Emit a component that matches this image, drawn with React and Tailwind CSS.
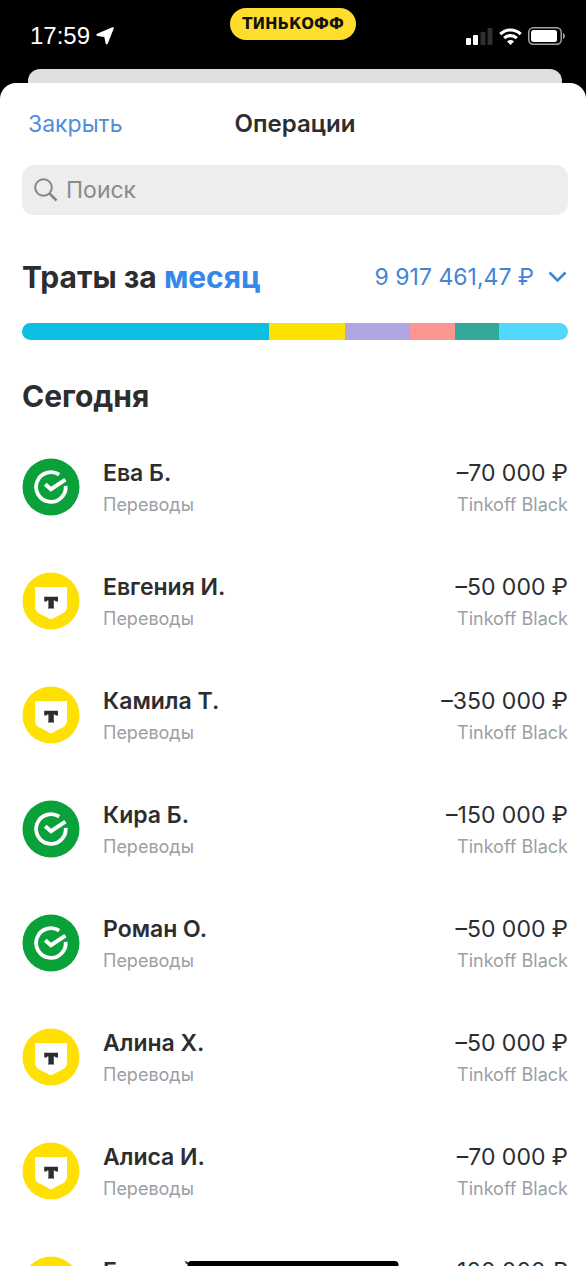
import { useState } from 'react'

const SEGMENTS = [
  { id: 'transfers', grow: 247, color: 'bg-[#0abfe0]' },
  { id: 'shops', grow: 76, color: 'bg-[#fde101]' },
  { id: 'services', grow: 65, color: 'bg-[#b0a5e3]' },
  { id: 'health', grow: 45, color: 'bg-[#fb9692]' },
  { id: 'transport', grow: 44, color: 'bg-[#32a898]' },
  { id: 'other', grow: 69, color: 'bg-[#52d8fb]' },
]

const OPERATIONS = [
  { id: 1, name: 'Ева Б.', amount: '–70 000 ₽', bank: 'sber' },
  { id: 2, name: 'Евгения И.', amount: '–50 000 ₽', bank: 'tinkoff' },
  { id: 3, name: 'Камила Т.', amount: '–350 000 ₽', bank: 'tinkoff' },
  { id: 4, name: 'Кира Б.', amount: '–150 000 ₽', bank: 'sber' },
  { id: 5, name: 'Роман О.', amount: '–50 000 ₽', bank: 'sber' },
  { id: 6, name: 'Алина Х.', amount: '–50 000 ₽', bank: 'tinkoff' },
  { id: 7, name: 'Алиса И.', amount: '–70 000 ₽', bank: 'tinkoff' },
  { id: 8, name: 'Евгений', amount: '–100 000 ₽', bank: 'tinkoff' },
]

function SberIcon() {
  return (
    <svg viewBox="0 0 58 58" className="size-[58px] shrink-0" fill="none" aria-hidden="true">
      <circle cx="29" cy="29" r="28.5" fill="#0aa03a" />
      <path d="M37.2 16.7A14.8 14.8 0 1 0 43.7 27.8" stroke="#fff" strokeWidth="3.8" />
      <path d="M23.2 26.2L29 31.2L43.4 21.6" stroke="#fff" strokeWidth="4" />
    </svg>
  )
}

function TinkoffIcon() {
  return (
    <svg viewBox="0 0 58 58" className="size-[58px] shrink-0" aria-hidden="true">
      <circle cx="29" cy="29" r="28.5" fill="#fee003" />
      <path d="M13 15H45V34.5C45 37.5 43.6 39.7 41 41.2L29 47.5L17 41.2C14.4 39.7 13 37.5 13 34.5Z" fill="#fff" />
      <path d="M22.2 24.8H36V29.6H33.6L33 28.4H31.8V35L32.2 36.4H26L26.4 35V28.4H25.2L24.6 29.6H22.2Z" fill="#2b2d33" />
    </svg>
  )
}

function StatusBar() {
  return (
    <div className="grid h-[69px] shrink-0 grid-cols-[1fr_auto_1fr] items-start px-5 text-white">
      <div className="flex items-center gap-1.5 pt-5 pl-2.5">
        <span className="font-['Liberation_Sans'] text-2xl leading-8">17:59</span>
        <svg viewBox="0 0 18 18" className="size-[18px]" fill="currentColor" aria-hidden="true">
          <path d="M17.6.4C17.9.7 17.9 1.1 17.7 1.6L11.8 16.6C11.3 17.8 9.8 17.6 9.6 16.3L8.3 9.9L1.4 9C.1 8.8-.1 7.3 1.1 6.7L16.4.3C16.9.1 17.3.1 17.6.4Z" />
        </svg>
      </div>
      <div className="mt-2 flex h-8 items-center rounded-full bg-[#ffdd2d] px-3 font-['DejaVu_Sans'] text-[15px] font-bold text-[#14120c]">
        ТИНЬКОФФ
      </div>
      <div className="flex items-center justify-end gap-1.5 pt-[27px]">
        <svg viewBox="0 0 27 17" className="h-[17px] w-[27px]" aria-hidden="true">
          <rect x="0" y="10" width="5" height="7" rx="1" fill="#fff" />
          <rect x="7" y="7" width="5" height="10" rx="1" fill="#fff" />
          <rect x="14.5" y="4" width="5" height="13" rx="1" fill="#303030" />
          <rect x="21.5" y="0" width="5" height="17" rx="1" fill="#303030" />
        </svg>
        <svg viewBox="0 0 23 17" className="h-[17px] w-[23px]" fill="none" stroke="#fff" strokeWidth="3.2" aria-hidden="true">
          <path d="M1.3 6.2A14.5 14.5 0 0 1 21.7 6.2" />
          <path d="M5.2 10.2A9 9 0 0 1 17.8 10.2" />
          <path d="M11.5 17L8 13.4A5 5 0 0 1 15 13.4Z" fill="#fff" stroke="none" />
        </svg>
        <svg viewBox="0 0 38 18" className="h-[18px] w-[38px]" aria-hidden="true">
          <rect x=".75" y=".75" width="32.5" height="16.5" rx="4.5" fill="none" stroke="#a5a5a5" strokeWidth="1.5" />
          <rect x="3" y="3" width="26" height="12" rx="2.5" fill="#fff" />
          <path d="M35 6C37.5 6.8 37.5 11.2 35 12Z" fill="#a5a5a5" />
        </svg>
      </div>
    </div>
  )
}

function Operation({ name, amount, bank }) {
  return (
    <li className="flex h-[114px] items-center gap-[23px]">
      {bank === 'sber' ? <SberIcon /> : <TinkoffIcon />}
      <div className="flex-1 pt-1">
        <p className="text-[23px] leading-8 font-semibold">{name}</p>
        <p className="text-lg leading-8 text-[#9a9fa6]">Переводы</p>
      </div>
      <div className="pt-1 text-right">
        <p className="text-[23px] leading-8">{amount}</p>
        <p className="text-lg leading-8 text-[#9a9fa6]">Tinkoff Black</p>
      </div>
    </li>
  )
}

export default function App() {
  const [query, setQuery] = useState('')

  return (
    <div className="relative flex h-screen flex-col overflow-hidden bg-black font-[Inter,sans-serif] text-[#2d2d2f]">
      <StatusBar />

      {/* Edge of the screen lying under the sheet */}
      <div className="mr-6 ml-7 h-[14px] shrink-0 rounded-t-xl bg-[#dfdfdf]" />

      <main className="flex-1 rounded-t-2xl bg-white pr-[18px] pl-[22px]">
        <header className="grid h-[82px] grid-cols-[1fr_auto_1fr] items-center">
          <button type="button" className="justify-self-start pl-1.5 text-[23px] text-[#4d8fdc]">
            Закрыть
          </button>
          <h1 className="text-2xl font-semibold">Операции</h1>
        </header>

        <label className="flex h-[50px] items-center gap-2 rounded-xl bg-[#ededee] px-3">
          <svg viewBox="0 0 24 24" className="size-6 shrink-0" fill="none" stroke="#858588" strokeWidth="2" aria-hidden="true">
            <circle cx="9.5" cy="9.5" r="8.3" />
            <path d="M15.5 15.5L22.5 22.5" strokeWidth="2.6" />
          </svg>
          <input
            type="search"
            aria-label="Поиск"
            placeholder="Поиск"
            value={query}
            onChange={(e) => setQuery(e.target.value)}
            className="w-full bg-transparent text-[23px] outline-none placeholder:text-[#8a8a8d]"
          />
        </label>

        {/* Spending summary */}
        <section className="pt-[42px]">
          <div className="flex items-center justify-between">
            <h2 className="text-3xl leading-10 font-bold">
              Траты за <a href="#period" className="text-[#3388e8]">месяц</a>
            </h2>
            <button type="button" className="flex items-center gap-3.5 text-[23px] text-[#4384d6]">
              9 917 461,47 ₽
              <svg viewBox="0 0 20 12" className="h-3 w-5" fill="none" stroke="currentColor" strokeWidth="2.6" aria-hidden="true">
                <path d="M1.5 1.5L9.5 9.5L17.500 1.5" />
              </svg>
            </button>
          </div>
          <div className="mt-[26px] flex h-[17px] overflow-hidden rounded-full">
            {SEGMENTS.map((s) => (
              <div key={s.id} className={s.color} style={{ flexGrow: s.grow }} />
            ))}
          </div>
        </section>

        <section className="pt-9">
          <h2 className="text-3xl leading-10 font-bold">Сегодня</h2>
          <ul className="pt-3.5">
            {OPERATIONS.map((op) => (
              <Operation key={op.id} {...op} />
            ))}
          </ul>
        </section>
      </main>

      {/* Home indicator */}
      <div className="absolute bottom-0 left-1/2 h-[5px] w-[36%] -translate-x-1/2 rounded-t bg-black" />
    </div>
  )
}
